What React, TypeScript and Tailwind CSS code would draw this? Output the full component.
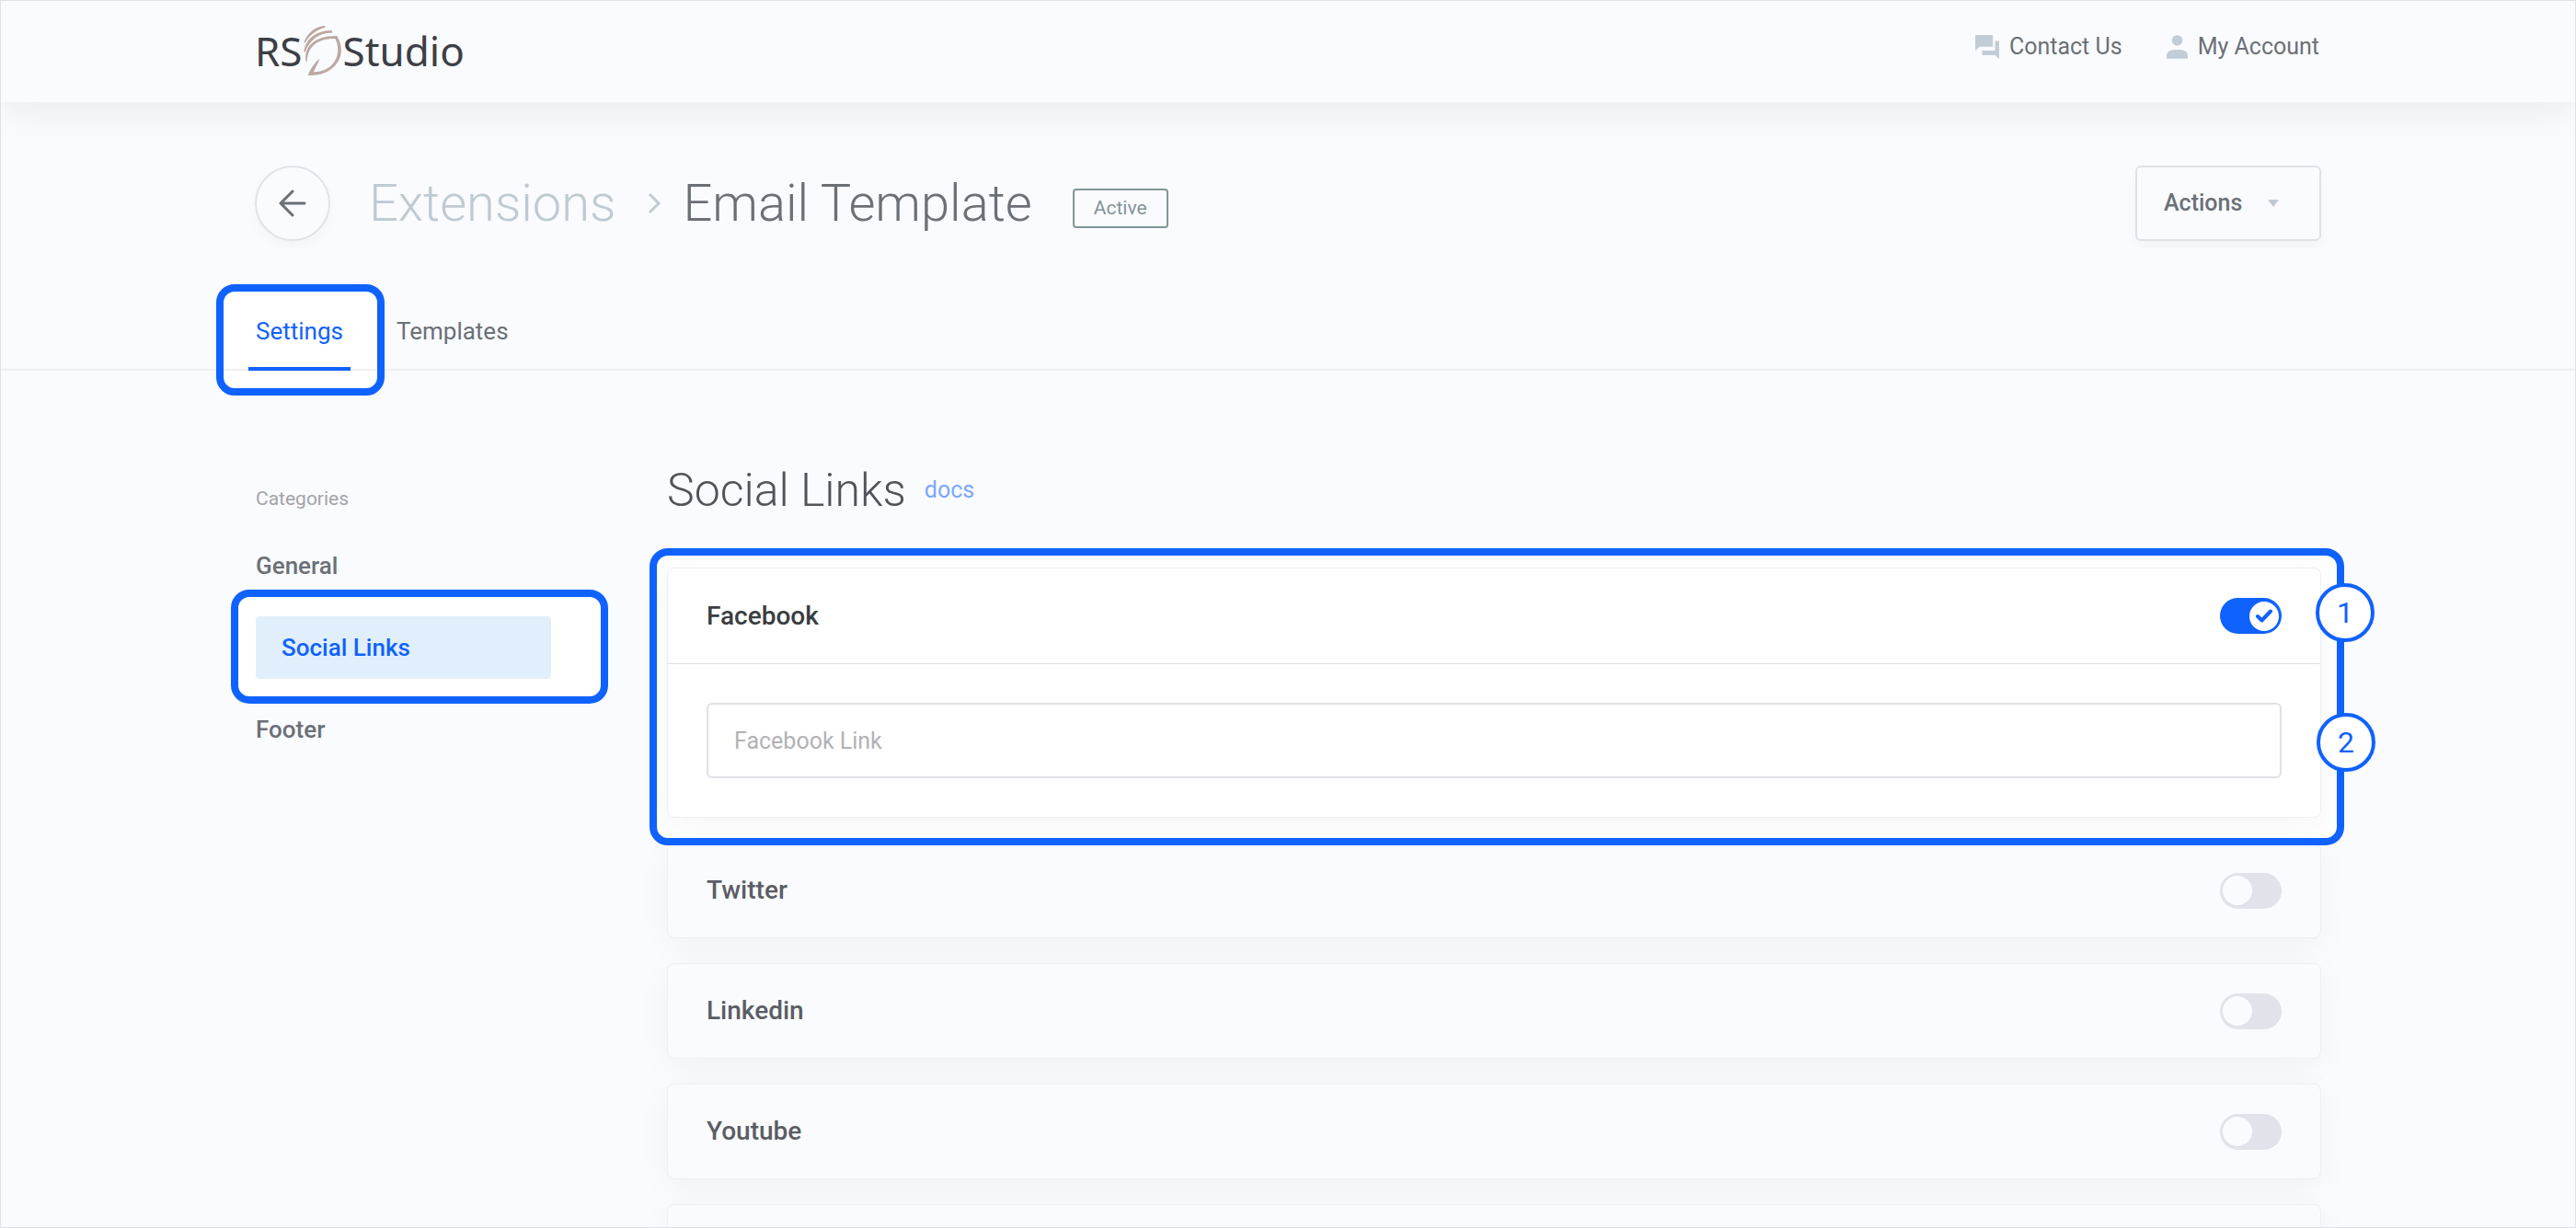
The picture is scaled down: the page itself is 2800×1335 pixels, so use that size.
import React, { useState } from "react";

function Logo() {
  return (
    <a href="#" aria-label="RS Studio" className="flex items-start font-['Noto_Sans'] text-[44px] leading-[56px] text-[#3c3f45]">
      <span>RS</span>
      <svg viewBox="260 78 135 168" className="-ml-px h-[56px] w-[45px]" fill="#bca9a2" aria-hidden="true">
        <path d="M267 134C279 105 303 83 336 81L336 87C308 94 286 111 270 138Z" />
        <path d="M267 166C271 130 300 97 358 96L360 104C318 103 288 124 270 168Z" />
        <path d="M274 199C266 168 283 113 375 114C389 138 395 168 380 195C363 226 325 247 280 242C288 222 300 203 319 187C313 205 304 219 298 232C334 232 360 214 371 190C382 165 378 141 369 123C310 122 279 150 277 199Z" />
      </svg>
      <span>Studio</span>
    </a>
  );
}

function ChatIcon() {
  return (
    <svg viewBox="0 0 76 76" className="size-[26px]" fill="#c2ccd6" aria-hidden="true">
      <path d="M3 0H53Q56 0 56 3V37H14L0 50V3Q0 0 3 0Z" />
      <path d="M63 19H73Q76 19 76 22V76L63 64H22V50H63Z" />
    </svg>
  );
}

function UserIcon() {
  return (
    <svg viewBox="0 0 68 76" className="h-[26px] w-[23px]" fill="#c2ccd6" aria-hidden="true">
      <circle cx="34" cy="17" r="17" />
      <path d="M0 76V66C0 52 14 47 34 47S68 52 68 66V76Z" />
    </svg>
  );
}

function Highlight({ className }: { className: string }) {
  return (
    <>
      <span aria-hidden="true" className={`pointer-events-none absolute -z-10 rounded-[20px] bg-white ${className}`} />
      <span aria-hidden="true" className={`pointer-events-none absolute z-10 rounded-[20px] border-8 border-[#0f62fe] ${className}`} />
    </>
  );
}

function Badge({ n, className }: { n: number; className: string }) {
  return (
    <span className={`absolute z-20 flex size-[64px] items-center justify-center rounded-full border-4 border-[#0f62fe] bg-white text-[32px] leading-[40px] text-[#0f62fe] ${className}`}>
      {n}
    </span>
  );
}

function Toggle({ label, initial = false }: { label: string; initial?: boolean }) {
  const [on, setOn] = useState(initial);
  return (
    <label className={`flex h-[39px] w-[67px] cursor-pointer items-center rounded-full px-[3px] ${on ? "justify-end bg-[#0f62fe]" : "justify-start bg-[#e0e3e9]"}`}>
      <input type="checkbox" role="switch" className="sr-only" checked={on} onChange={(e) => setOn(e.target.checked)} aria-label={label} />
      <span className={`flex size-[32px] items-center justify-center rounded-full ${on ? "bg-white" : "bg-[#fafbff]"}`}>
        {on && (
          <svg viewBox="0 0 18 15" className="h-[15px] w-[18px]" fill="none" stroke="#0f62fe" strokeWidth="4" strokeLinecap="round" strokeLinejoin="round" aria-hidden="true">
            <path d="M2 8L6.500 12.500L16 2.500" />
          </svg>
        )}
      </span>
    </label>
  );
}

const cardClass = "rounded-lg border border-[#eeeff3] shadow-[0_8px_36px_rgba(0,0,0,0.045)]";

function Card({ title }: { title?: string }) {
  return (
    <section className={`${cardClass} flex h-[104px] items-center justify-between bg-[#fafbff] px-[42px]`}>
      {title && (
        <>
          <h3 className="text-[28px] leading-[36px] font-medium text-[#5a5e64]">{title}</h3>
          <Toggle label={title} />
        </>
      )}
    </section>
  );
}

export default function App() {
  return (
    <div className="isolate h-screen overflow-hidden border border-[#dfe0e6] bg-[#fafbff] font-[Roboto,sans-serif] text-[#6b7077]">
      <header className="h-[110px] shadow-[0_10px_40px_rgba(0,0,0,0.065)]">
        <div className="mx-auto flex max-w-[2246px] items-start justify-between">
          <div className="pt-[26px]">
            <Logo />
          </div>
          <nav className="flex gap-12 pt-8 pr-[2px] text-[25px] leading-[36px]">
            <a href="#" className="flex items-center gap-[11px]">
              <ChatIcon />
              Contact Us
            </a>
            <a href="#" className="flex items-center gap-[11px]">
              <UserIcon />
              My Account
            </a>
          </nav>
        </div>
      </header>

      <div className="mx-auto mt-[69px] flex h-[82px] max-w-[2246px] items-center">
        <button aria-label="Back" className="flex size-[82px] items-center justify-center rounded-full border-2 border-[#e2e3e8] shadow-[0_6px_12px_rgba(0,0,0,0.03)]">
          <svg viewBox="0 0 30 30" className="size-[30px]" fill="none" stroke="#6b6f77" strokeWidth="3" strokeLinecap="round" strokeLinejoin="round" aria-hidden="true">
            <path d="M28 15H2M15 2L2 15L15 28" />
          </svg>
        </button>
        <a href="#" className="ml-[42px] text-[56px] leading-[72px] font-light text-[#c0cad3]">
          Extensions
        </a>
        <svg viewBox="0 0 14 24" className="mr-6 ml-[35px] h-[24px] w-[14px]" fill="none" stroke="#c0cad3" strokeWidth="3" aria-hidden="true">
          <path d="M2 2L12 12L2 22" />
        </svg>
        <h1 className="text-[56px] leading-[72px] font-light">Email Template</h1>
        <span className="mt-[10px] ml-[44px] flex h-[43px] w-[104px] items-center justify-center rounded border-2 border-[#7f9699] text-[21px] leading-[30px] text-[#84939a]">Active</span>
        <button className="ml-auto flex h-[82px] w-[202px] items-center rounded-md border-2 border-[#e0e1e7] pl-[29px] text-[25px] leading-[36px] font-medium shadow-[0_6px_12px_rgba(0,0,0,0.03)]">
          Actions
          <svg viewBox="0 0 12 8" className="ml-[28px] h-[8px] w-[12px]" fill="#c0cad3" aria-hidden="true">
            <path d="M0 0H12L6 8Z" />
          </svg>
        </button>
      </div>

      <nav className="mt-[80px] h-[61px] border-b-2 border-[#eeeff3] text-[26px] leading-[36px]">
        <div className="mx-auto flex max-w-[2244px] gap-[42px]">
          <a href="#" aria-current="page" className="relative -ml-2 h-[61px] border-b-4 border-[#0f62fe] px-2 text-[#0f62fe]">
            <Highlight className="-right-[37px] -left-[35px] -top-[33px] -bottom-[31px]" />
            Settings
          </a>
          <a href="#" className="px-2">
            Templates
          </a>
        </div>
      </nav>

      <div className="mx-auto mt-[100px] grid max-w-[2246px] grid-cols-[322px_1fr] gap-x-[126px]">
        <aside className="pt-[24px] pl-px">
          <h2 className="mb-10 text-[21px] leading-[30px] text-[#a3a3a8]">Categories</h2>
          <ul className="flex flex-col gap-[37px] text-[26px] leading-[36px] font-medium">
            <li>
              <a href="#">General</a>
            </li>
            <li className="relative">
              <Highlight className="-top-[29px] -right-[62px] -bottom-[27px] -left-[27px]" />
              <a href="#" aria-current="true" className="block rounded bg-[#e1effc] px-7 py-4 text-[#0f62fe]">
                Social Links
              </a>
            </li>
            <li>
              <a href="#">Footer</a>
            </li>
          </ul>
        </aside>

        <main className="flex flex-col gap-[27px]">
          <div className="mb-[27px] flex items-center gap-5">
            <h2 className="text-[50px] leading-[60px] font-light text-[#50545a]">Social Links</h2>
            <a href="#" className="text-[25px] leading-[36px] text-[#7ba7ff]">
              docs
            </a>
          </div>

          <div className="relative isolate z-10">
            <Highlight className="-top-[21px] -right-[25px] -bottom-[30px] -left-[19px]" />
            <section className={`${cardClass} bg-white`}>
              <div className="flex h-[104px] items-center justify-between border-b border-[#dfe0e6] px-[42px]">
                <h3 className="text-[28px] leading-[36px] font-medium text-[#3a3d42]">Facebook</h3>
                <Toggle label="Facebook" initial />
              </div>
              <div className="p-[42px]">
                <input
                  type="url"
                  aria-label="Facebook Link"
                  placeholder="Facebook Link"
                  className="block h-[82px] w-full rounded-md border-2 border-[#e0e0e6] bg-white px-[28px] text-[25px] leading-[36px] placeholder:text-[#b3b1b4]"
                />
              </div>
            </section>
            <Badge n={1} className="top-[17px] -right-[58px]" />
            <Badge n={2} className="top-[158px] -right-[59px]" />
          </div>

          <Card title="Twitter" />
          <Card title="Linkedin" />
          <Card title="Youtube" />
          <Card />
        </main>
      </div>
    </div>
  );
}
